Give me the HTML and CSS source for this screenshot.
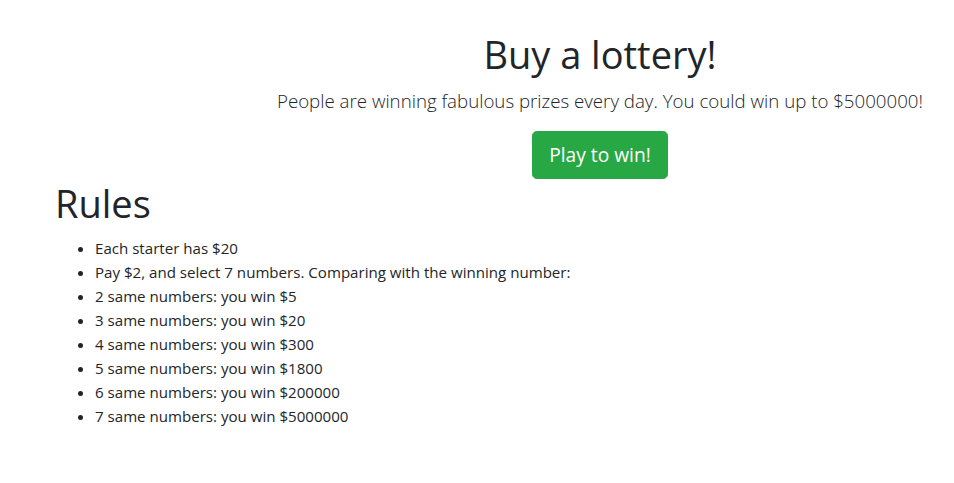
FILE: index.html
```html
<!DOCTYPE html>
<html lang="en">
<head>
<meta charset="utf-8">
<title>Buy a lottery!</title>
<link rel="stylesheet" href="styles.css">
</head>
<body>
<main class="page">
  <section class="hero">
    <h1 class="hero-title">Buy a lottery!</h1>
    <p class="lead">People are winning fabulous prizes every day. You could win up to $5000000!</p>
    <button class="btn-play" type="button">Play to win!</button>
  </section>
  <section class="rules">
    <h1 class="rules-title">Rules</h1>
    <ul class="rules-list">
      <li>Each starter has $20</li>
      <li>Pay $2, and select 7 numbers. Comparing with the winning number:</li>
      <li>2 same numbers: you win $5</li>
      <li>3 same numbers: you win $20</li>
      <li>4 same numbers: you win $300</li>
      <li>5 same numbers: you win $1800</li>
      <li>6 same numbers: you win $200000</li>
      <li>7 same numbers: you win $5000000</li>
    </ul>
  </section>
</main>
</body>
</html>
```
FILE: styles.css
```css
* { box-sizing: border-box; }
html, body { margin: 0; padding: 0; background: #fff; }
body {
  font-family: "Open Sans", "Noto Sans", sans-serif;
  font-size: 15.1px;
  line-height: 24px;
  color: #212529;
}
.page { padding-top: 30px; }
.hero {
  margin-left: 246px;
  text-align: center;
}
.hero-title, .rules-title {
  font-size: 38px;
  font-weight: 400;
  line-height: 48px;
  margin: 0 0 8px;
}
.lead {
  font-size: 18.7px;
  font-weight: 300;
  line-height: 30px;
  margin: 0 0 15px;
}
.btn-play {
  display: inline-block;
  font-family: inherit;
  font-size: 19.2px;
  line-height: 30px;
  padding: 8px 16px;
  border: 1px solid #28a745;
  border-radius: 4.8px;
  background: #28a745;
  color: #fff;
  cursor: pointer;
}
.rules { padding-left: 55px; }
.rules-title { margin-bottom: 9px; }
.rules-list {
  margin: 0;
  padding-left: 40px;
}
```
